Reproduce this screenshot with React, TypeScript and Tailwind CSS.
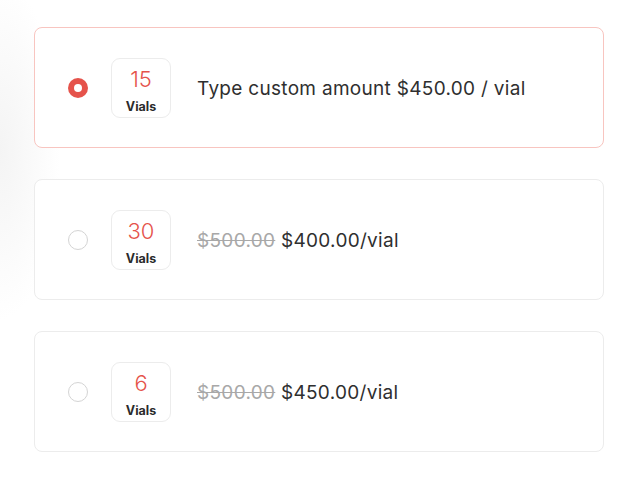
const options = [
  { qty: 15, selected: true, custom: true, price: '$450.00 / vial' },
  { qty: 30, selected: false, old: '$500.00', price: '$400.00/vial' },
  { qty: 6, selected: false, old: '$500.00', price: '$450.00/vial' },
];

function Radio({ checked }: { checked: boolean }) {
  if (checked) {
    return (
      <span className="flex h-5 w-5 shrink-0 items-center justify-center rounded-full bg-[#e5534b]">
        <span className="h-2 w-2 rounded-full bg-white" />
      </span>
    );
  }
  return <span className="h-5 w-5 shrink-0 rounded-full border border-[#d4d4d4] bg-white" />;
}

export default function App() {
  return (
    <div
      className="min-h-[483px] w-full bg-white bg-[radial-gradient(ellipse_60px_170px_at_0px_150px,#f4f4f4,transparent)] pl-[34px] pr-[33px] pt-[27px] pb-[30px]"
      style={{ fontFamily: 'Inter, "Noto Sans", sans-serif' }}
    >
      <div className="flex flex-col gap-[31px]">
        {options.map((o) => (
          <label
            key={o.qty}
            className={`flex h-[121px] items-center rounded-lg border bg-white pl-[33px] ${
              o.selected ? 'border-[#f8c5c0]' : 'border-[#ececec]'
            }`}
          >
            <Radio checked={o.selected} />
            <div className="ml-[23px] flex h-[60px] w-[60px] shrink-0 flex-col items-center rounded-[9px] border border-[#ececec] bg-white pt-[9px]">
              <span className="text-[22px] font-light leading-[22px] text-[#e5534b]">{o.qty}</span>
              <span className="mt-[10px] text-[12.5px] font-bold leading-[14px] text-[#2b2b2b]">Vials</span>
            </div>
            <div className="ml-[26px] mt-[3px] text-[19px] tracking-[0.3px] text-[#2f2f2f]">
              {o.custom ? (
                <span>Type custom amount {o.price}</span>
              ) : (
                <span>
                  <span className="text-[#a8a8a8] line-through">{o.old}</span> {o.price}
                </span>
              )}
            </div>
          </label>
        ))}
      </div>
    </div>
  );
}
